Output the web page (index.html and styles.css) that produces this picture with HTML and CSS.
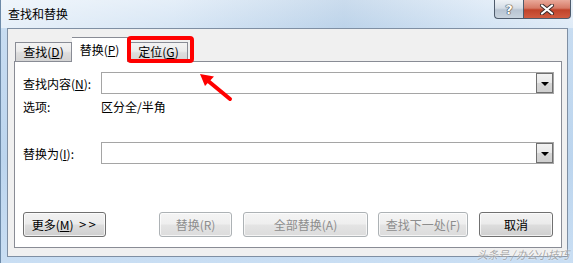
FILE: index.html
```html
<!DOCTYPE html>
<html>
<head>
<meta charset="utf-8">
<link rel="stylesheet" href="styles.css">
</head>
<body>
<div class="window">
  <div class="titlebar">
    <span class="title">查找和替换</span>
    <div class="caption">
      <div class="cap help"><span>?</span></div>
      <div class="cap close">
        <svg width="16" height="11" viewBox="0 0 16 11"><path d="M3 1.5 L13 9.5 M13 1.5 L3 9.5" stroke="#3a2a2a" stroke-width="4" stroke-linecap="round"/><path d="M3 1.5 L13 9.5 M13 1.5 L3 9.5" stroke="#fff" stroke-width="2.2" stroke-linecap="round"/></svg>
      </div>
    </div>
  </div>
  <div class="client">
    <div class="tabs">
      <div class="tab t1">查找(<u>D</u>)</div>
      <div class="tab sel">替换(<u>P</u>)</div>
      <div class="tab t3">定位(<u>G</u>)</div>
    </div>
    <div class="pane">
      <div class="row r1">
        <span class="lbl">查找内容(<u>N</u>):</span>
        <div class="combo"><div class="drop"><i></i></div></div>
      </div>
      <div class="row r2">
        <span class="lbl">选项:</span>
        <span>区分全/半角</span>
      </div>
      <div class="row r3">
        <span class="lbl">替换为(<u>I</u>):</span>
        <div class="combo"><div class="drop"><i></i></div></div>
      </div>
      <div class="buttons">
        <div class="btn b-more">更多(<u>M</u>) <span class="gt">&gt;&gt;</span></div>
        <div class="btn dis b-rep">替换(R)</div>
        <div class="btn dis b-all">全部替换(A)</div>
        <div class="btn dis b-next">查找下一处(F)</div>
        <div class="btn b-cancel">取消</div>
      </div>
    </div>
  </div>
  <div class="redbox"></div>
  <svg class="arrow" width="40" height="32" viewBox="0 0 40 32">
    <path d="M32 28 L9 9" stroke="#f00" stroke-width="4" stroke-linecap="round"/>
    <path d="M2 3 L16 5.5 L7 15 Z" fill="#f00"/>
  </svg>
  <div class="watermark">头条号 / 办公小技巧</div>
</div>
</body>
</html>
```
FILE: styles.css
```css
* { box-sizing: border-box; }
html, body { margin: 0; padding: 0; }
body {
  width: 573px; height: 263px; overflow: hidden;
  font-family: "Noto Sans CJK SC", "Microsoft YaHei", sans-serif;
  font-size: 12px; color: #000;
}
.window {
  position: relative;
  width: 573px; height: 263px;
  background: linear-gradient(180deg, #dce9f6 0%, #c7dcf1 12%, #bcd5ee 60%, #c9def3 100%);
  border-left: 1px solid #6d8aa8;
}
.titlebar {
  height: 28px;
  display: flex;
  align-items: flex-start;
  background: linear-gradient(90deg, rgba(255,255,255,0.55) 0%, rgba(255,255,255,0.25) 30%, rgba(150,180,210,0.25) 60%, rgba(255,255,255,0.2) 85%, rgba(255,255,255,0.4) 100%);
}
.title {
  margin: 6px 0 0 7px;
  line-height: 16px;
  color: #000;
}
.caption {
  margin-left: auto;
  margin-right: 2px;
  display: flex;
}
.cap {
  height: 19px;
  border: 1px solid #4e5b6c;
  border-top: none;
  display: flex; align-items: center; justify-content: center;
}
.help {
  width: 29px;
  border-right: none;
  border-radius: 0 0 0 4px;
  background: linear-gradient(180deg, #eef2f6 0%, #d5dde6 45%, #b8c4d2 55%, #c8d3de 100%);
}
.help span {
  font-family: "DejaVu Sans", sans-serif;
  font-weight: bold; font-size: 13px;
  color: #fff;
  text-shadow: 0 0 1px #333, 0 0 1px #333, 0 0 1px #333;
}
.close {
  width: 48px;
  border-radius: 0 0 4px 0;
  background: linear-gradient(180deg, #e9a99a 0%, #d67a66 45%, #c0432a 55%, #d15b40 100%);
}
.client {
  margin: 0 5px 0 6px;
  height: 229px;
  border: 1px solid #7f8fa3;
  background: #f0f0f0;
  padding: 8px 5px 0 6px;
}
.tabs {
  display: flex;
  align-items: flex-end;
  height: 24px;
  padding-left: 1px;
  position: relative;
  z-index: 2;
}
.tab {
  height: 19px;
  line-height: 18px;
  border: 1px solid #898c95;
  border-bottom: none;
  background: linear-gradient(180deg, #f3f3f3 0%, #ebebeb 45%, #dddddd 55%, #d4d4d4 100%);
  text-align: center;
}
.t1 { width: 57px; }
.sel {
  width: 56px;
  height: 25px;
  margin-bottom: -1px;
  background: #fff;
  line-height: 24px;
  border-left: none;
}
.t3 { width: 59px; margin-left: 1px; }
.pane {
  height: 187px;
  border: 1px solid #898c95;
  background: #fff;
  padding: 10px 7px 0 8px;
}
.row {
  display: flex;
  align-items: center;
}
.lbl { width: 78px; flex: none; }
.combo {
  flex: 1;
  height: 22px;
  border: 1px solid #a5a5a5;
  background: #fff;
  display: flex;
  justify-content: flex-end;
  padding: 0;
}
.drop {
  width: 17px; height: 20px;
  border: 1px solid #707070;
  background: linear-gradient(180deg, #f2f2f2 0%, #e8e8e8 50%, #d6d6d6 51%, #cfcfcf 100%);
  display: flex; align-items: center; justify-content: center;
}
.drop i {
  width: 0; height: 0;
  border-left: 4px solid transparent;
  border-right: 4px solid transparent;
  border-top: 4px solid #000;
  margin-top: 1px;
}
.r2 { margin-top: 4px; line-height: 18px; }
.r3 { margin-top: 26px; }
.buttons {
  display: flex;
  margin-top: 48px;
}
.btn {
  height: 25px;
  border: 1px solid #707070;
  border-radius: 3px;
  background: linear-gradient(180deg, #f2f2f2 0%, #ebebeb 48%, #dddddd 52%, #cfcfcf 100%);
  display: flex; align-items: center; justify-content: center;
  box-shadow: inset 0 0 0 1px rgba(255,255,255,0.7);
}
.dis {
  color: #8d8d8d;
  border-color: #adb2b5;
  background: linear-gradient(180deg, #f4f4f4 0%, #efefef 48%, #e4e4e4 52%, #dcdcdc 100%);
}
.b-more { width: 83px; }
.gt { margin-left: 5px; font-family: "DejaVu Sans", sans-serif; font-size: 10px; letter-spacing: 1px; }
.b-rep { width: 73px; margin-left: 53px; }
.b-all { width: 125px; margin-left: 11px; }
.b-next { width: 90px; margin-left: 10px; }
.b-cancel { width: 74px; margin-left: 11px; }
.redbox {
  position: absolute;
  left: 126px; top: 36px;
  width: 67px; height: 27px;
  border: 4px solid #f00;
  border-radius: 4px;
  z-index: 5;
}
.arrow {
  position: absolute;
  left: 197px; top: 71px;
  z-index: 5;
}
.watermark {
  position: absolute;
  left: 476px; top: 246px;
  font-size: 11px;
  color: rgba(140,140,140,0.75);
  font-style: italic;
  letter-spacing: -0.5px;
  text-shadow: 0 0 2px #fff;
  z-index: 5;
}
```
